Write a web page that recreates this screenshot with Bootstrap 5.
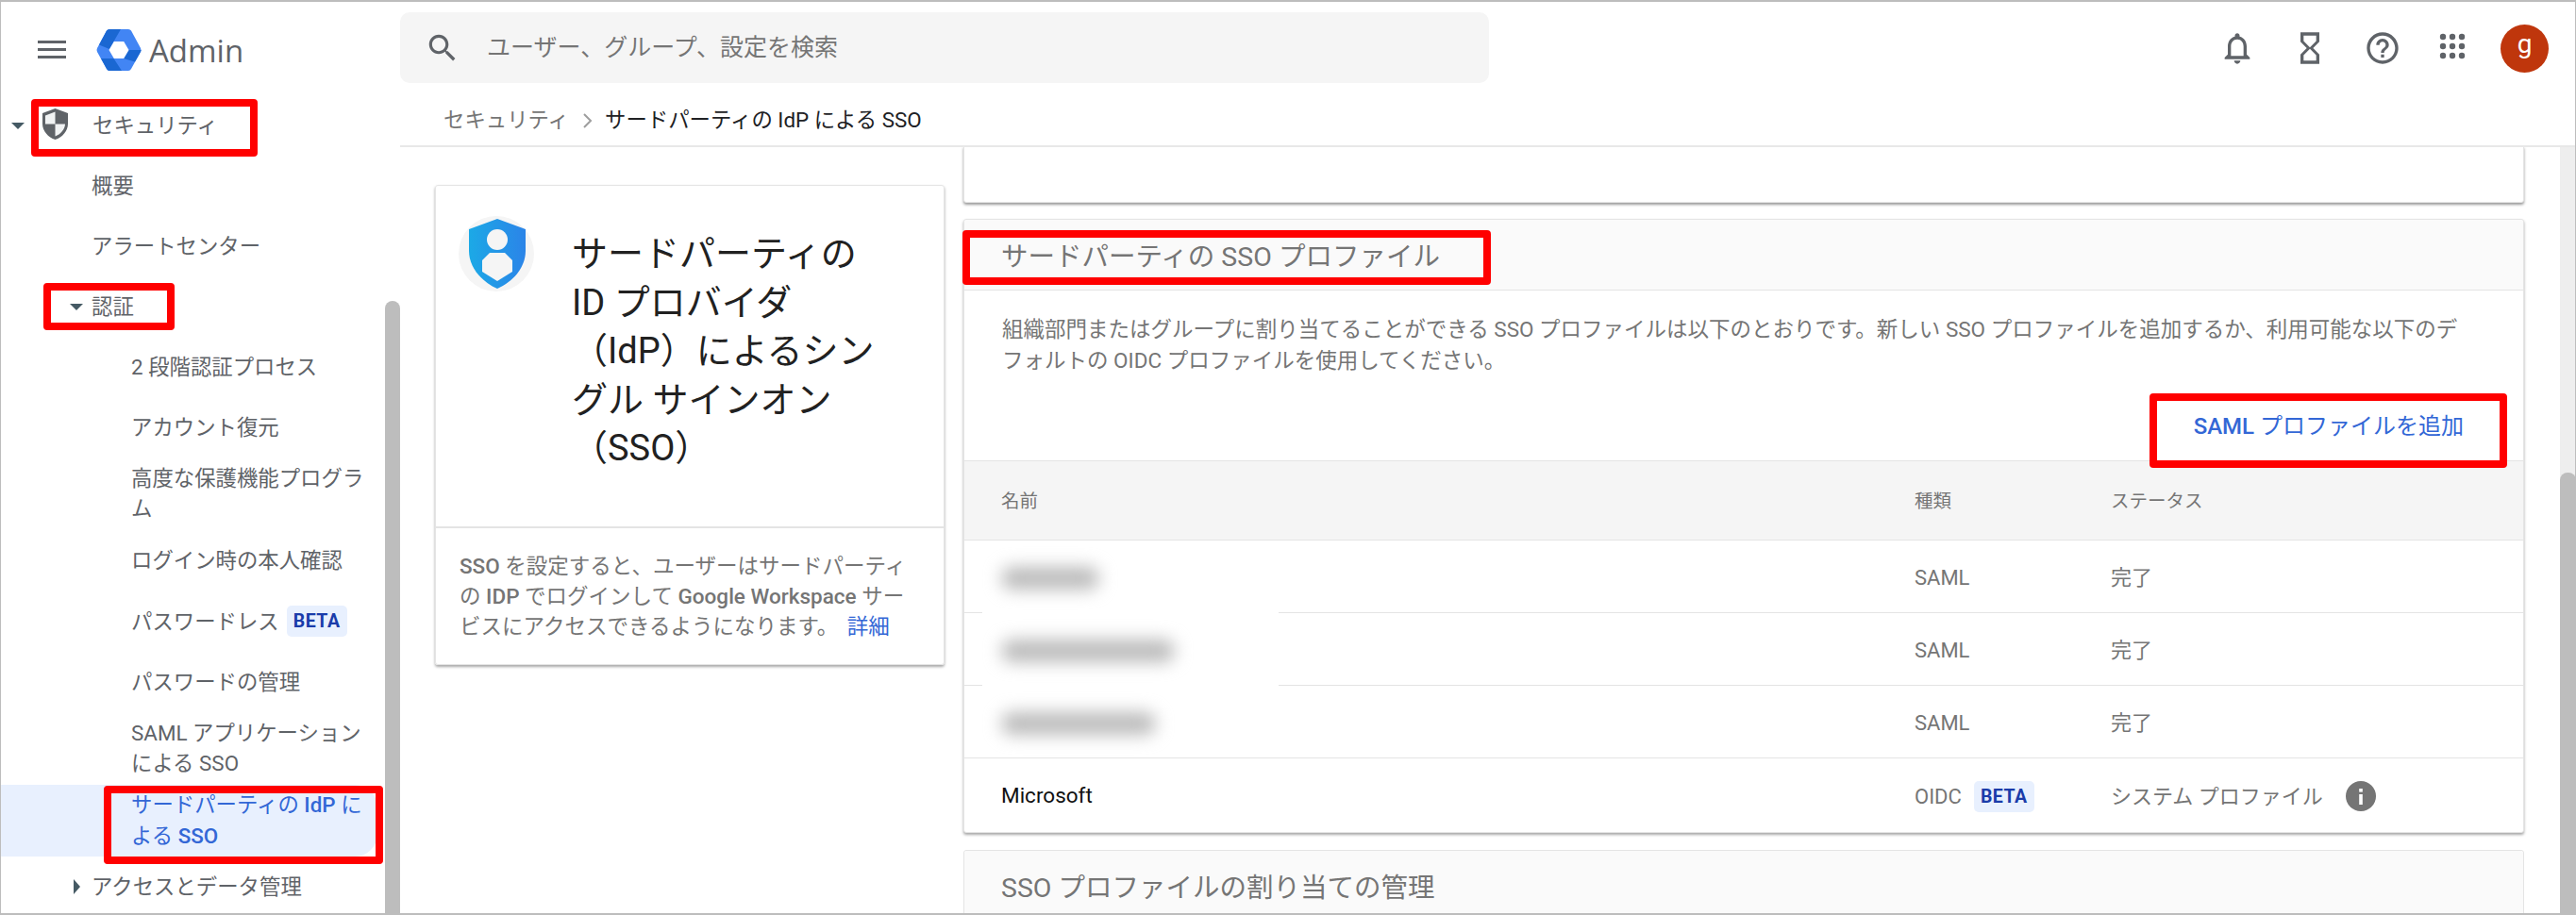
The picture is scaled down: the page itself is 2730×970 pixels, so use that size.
<!DOCTYPE html>
<html lang="ja">
<head>
<meta charset="UTF-8">
<title>Admin - サードパーティの IdP による SSO</title>
<link href="https://cdn.jsdelivr.net/npm/bootstrap@5.3.0/dist/css/bootstrap.min.css" rel="stylesheet">
<style>
html, body { height: 100%; overflow: hidden; }
body { font-family: Roboto, "Noto Sans CJK JP", sans-serif; font-size: 22.4px; color: #5f6368; background: #fff; }
.app-shell { position: relative; height: 970px; overflow: hidden; }
.app-frame { position: absolute; inset: 0; border: 1px solid #bdbdbd; border-top-width: 2px; border-bottom-width: 2px; pointer-events: none; z-index: 9; }
.note-box { position: absolute; border: 8px solid #f00; border-radius: 4px; z-index: 8; pointer-events: none; }
.note-a { left: 33px; top: 105px; width: 240px; height: 61px; }
.note-b { left: 46px; top: 300px; width: 139px; height: 50px; }
.note-c { left: 110px; top: 833px; width: 296px; height: 83px; }
.note-d { left: 1020px; top: 244px; width: 560px; height: 58px; }
.note-e { left: 2278px; top: 417px; width: 379px; height: 79px; }

.top-bar { height: 88px; }
.brand-area { width: 424px; padding-left: 40px; padding-top: 18px; }
.brand-name { font-family: "Open Sans", Roboto, sans-serif; font-size: 33px; color: #5f6368; margin-left: 8px; line-height: 1; }
.search-box { width: 1154px; height: 75px; margin-top: 13px; background: #f5f5f5; border-radius: 10px; padding-left: 26px; color: #757575; font-size: 25px; }
.search-box span { margin-left: 28px; }
.top-right { padding-top: 14px; }
.top-icons { gap: 37px; }
.top-icon { width: 40px; height: 40px; }
.user-dot { width: 51px; height: 51px; border-radius: 50%; background: #bf360c; color: #fff; font-size: 28px; margin-left: 28px; margin-right: 29px; line-height: 1; padding-bottom: 8px; }

.side-nav { width: 424px; height: 882px; position: relative; padding-top: 13px; overflow: hidden; }
.side-thumb { position: absolute; right: 0; top: 231px; bottom: 0; width: 16px; background: #bdbdbd; border-radius: 8px 8px 0 0; }
.side-item { display: flex; align-items: center; padding-top: 16px; padding-bottom: 16px; line-height: 32px; color: #5f6368; font-size: 22.4px; text-decoration: none; }
.lvl-1 { padding-left: 97px; }
.lvl-2 { padding-left: 139px; padding-right: 20px; width: 408px; }
.side-two { padding-top: 6px; padding-bottom: 7px; }
.side-active { width: 400px; height: 76px; padding: 5px 0 5px 139px; background: #e8f0fe; color: #3367d6; border-radius: 0 24px 24px 0; line-height: 33px; white-space: nowrap; }
.caret-down { width: 0; height: 0; border-left: 7px solid transparent; border-right: 7px solid transparent; border-top: 7px solid #455a64; }
.caret-right { width: 0; height: 0; border-top: 8px solid transparent; border-bottom: 8px solid transparent; border-left: 7px solid #455a64; }
.lat { font-weight: 500; }
.beta-tag { display: inline-block; background: #e8f0fe; color: #1a3caa; font-weight: 700; font-size: 19.5px; line-height: 33px; height: 33px; border-radius: 5px; padding: 0 7px; letter-spacing: .5px; }
.beta-gap { margin-left: 13px; }

.crumb-bar { height: 68px; border-bottom: 2px solid #e8e8e8; padding-left: 46px; padding-top: 14px; font-size: 22.4px; color: #757575; }
.crumb-now { color: #202124; }
.crumb-sep { margin: 0 12px 0 14px; }
.work-row { height: 814px; overflow: hidden; }
.work-col-left { width: 577px; padding-left: 37px; padding-top: 40px; }
.work-col-right { width: 1654px; margin-left: 20px; margin-right: 38px; }
.main-scroll { width: 17px; background: #eee; }
.main-thumb { margin-top: 345px; height: 470px; background: #bdbdbd; border-radius: 8px 8px 0 0; }

.info-card { height: 509px; border: 1px solid #e4e4e4; border-radius: 3px; box-shadow: 0 2px 3px rgba(0,0,0,.35); }
.info-top { height: 363px; padding: 32px 0 0 24px; border-bottom: 2px solid #e4e4e4; }
.info-title { font-size: 38px; line-height: 51.5px; color: #212121; margin: 15px 0 0 40px; white-space: nowrap; font-weight: 400; }
.info-text { padding: 24px 20px 24px 25px; line-height: 32px; color: #757575; font-size: 22.5px; white-space: nowrap; }
.info-text a, .add-btn { color: #3367d6; text-decoration: none; }

.stub-card { height: 60px; margin-top: -1px; border: 1px solid #e4e4e4; border-radius: 0 0 3px 3px; box-shadow: 0 2px 3px rgba(0,0,0,.4); }
.sso-card { margin-top: 17px; height: 651px; border-color: #e4e4e4; border-radius: 3px; box-shadow: 0 2px 3px rgba(0,0,0,.35); }
.sso-card .card-header, .plain-card .card-header { height: 75px; padding: 4px 0 0 39px; background: #fafafa; border-bottom: 1px solid #e4e4e4; font-size: 28.5px; line-height: 71px; color: #757575; border-radius: 3px 3px 0 0; white-space: nowrap; }
.sso-desc { padding: 25px 60px 0 40px; line-height: 33px; color: #757575; font-size: 22.5px; white-space: nowrap; }
.add-row { height: 40px; margin-top: 33px; margin-bottom: 16px; padding-right: 63px; }
.add-btn { padding: 0; border: 0; font-size: 24px; line-height: 40px; }
.table-wrap { position: relative; }
.line-gap { position: absolute; left: 19px; top: 156px; width: 314px; height: 87px; background: #fff; z-index: 1; }
.sso-table { table-layout: fixed; margin: 0; color: #757575; font-size: 22px; }
.sso-table th, .sso-table td { padding: 3px 0 0; vertical-align: middle; border-color: #e4e4e4; color: #757575; }
.sso-table thead th { height: 84px; background: #f5f5f5; font-weight: 400; font-size: 19.5px; border-top: 1px solid #e4e4e4; }
.sso-table tbody td { height: 77px; }
.sso-table tr:last-child td { height: 78px; border-bottom: 0; }
.sso-table .name-cell { padding-left: 39px; position: relative; z-index: 2; }
.sso-table td.ms-name { color: #111; font-size: 22.5px; }
.blur-name { display: block; height: 24px; background: #bbb; border-radius: 12px; filter: blur(9px); }
.col-name { width: 1007px; }
.col-kind { width: 208px; }
.info-dot { width: 32px; height: 32px; margin-left: 24px; }
.plain-card { margin-top: 18px; height: 120px; border-color: #e4e4e4; border-radius: 3px; }
</style>
</head>
<body>
<div class="app-shell">
  <div class="app-frame"></div>
  <div class="note-box note-a"></div>
  <div class="note-box note-b"></div>
  <div class="note-box note-c"></div>
  <div class="note-box note-d"></div>
  <div class="note-box note-e"></div>

  <header class="top-bar d-flex">
    <div class="brand-area d-flex align-items-center">
      <svg width="30" height="20" viewBox="0 0 30 20" class="me-4 flex-shrink-0"><rect y="0" width="30" height="3" fill="#5f6368"/><rect y="8" width="30" height="3" fill="#5f6368"/><rect y="16" width="30" height="3" fill="#5f6368"/></svg>
      <svg width="48" height="44" viewBox="0 0 48 44" class="ms-2 flex-shrink-0">
        <path d="M11 1.5Q12 0 14 0H34Q36 0 37 1.5L47 20Q48 22 47 24L37 42Q36 44 34 44H14Q12 44 11 42L1 24Q0 22 1 20Z" fill="#4285f4"/>
        <path d="M3 16.5L11 1.5Q12 0 14 0H26L18.5 13L14 21Z" fill="#1a67d2"/>
        <path d="M34.5 22H47.6Q47.6 23 47 24L41 34.5L29 31Z" fill="#1a67d2"/>
        <path d="M5 31L18.5 31L27 44H14Q12 44 11 42Z" fill="#1a67d2"/>
        <path d="M18.8 13H29.2L34.5 22L29.2 31H18.8L13.5 22Z" fill="#fff"/>
      </svg>
      <span class="brand-name">Admin</span>
    </div>
    <div class="search-box d-flex align-items-center">
      <svg width="38" height="38" viewBox="0 0 24 24" fill="#5f6368"><path d="M15.5 14h-.79l-.28-.27C15.41 12.59 16 11.11 16 9.5 16 5.91 13.09 3 9.5 3S3 5.91 3 9.5 5.91 16 9.5 16c1.61 0 3.09-.59 4.23-1.57l.27.28v.79l5 4.99L20.49 19l-4.99-5zm-6 0C7.01 14 5 11.99 5 9.5S7.01 5 9.5 5 14 7.01 14 9.5 11.99 14 9.5 14z"/></svg>
      <span>ユーザー、グループ、設定を検索</span>
    </div>
    <div class="top-right ms-auto d-flex align-items-center">
      <div class="top-icons d-flex align-items-center">
        <svg class="top-icon" viewBox="0 0 24 24" fill="#5f6368"><path d="M12 22c1.1 0 2-.9 2-2h-4c0 1.1.9 2 2 2zm6-6v-5c0-3.07-1.63-5.64-4.5-6.32V4c0-.83-.67-1.5-1.5-1.5s-1.5.67-1.5 1.5v.68C7.64 5.36 6 7.92 6 11v5l-2 2v1h16v-1l-2-2zm-2 1H8v-6c0-2.48 1.51-4.5 4-4.5s4 2.02 4 4.5v6z"/></svg>
        <svg class="top-icon" viewBox="0 0 24 24" fill="#5f6368"><path d="M6 2v6h.01L6 8.01 10 12l-4 4 .01.01H6V22h12v-5.99h-.01L18 16l-4-4 4-3.99-.01-.01H18V2H6zm10 14.5V20H8v-3.5l4-4 4 4zm-4-5l-4-4V4h8v3.5l-4 4z"/></svg>
        <svg class="top-icon" viewBox="0 0 24 24" fill="#5f6368"><path d="M11 18h2v-2h-2v2zm1-16C6.48 2 2 6.48 2 12s4.48 10 10 10 10-4.48 10-10S17.52 2 12 2zm0 18c-4.41 0-8-3.59-8-8s3.59-8 8-8 8 3.59 8 8-3.59 8-8 8zm0-14c-2.21 0-4 1.79-4 4h2c0-1.1.9-2 2-2s2 .9 2 2c0 2-3 1.75-3 5h2c0-2.25 3-2.5 3-5 0-2.21-1.79-4-4-4z"/></svg>
        <svg class="top-icon" viewBox="0 0 40 40" fill="#5f6368"><circle cx="7" cy="8" r="3.2"/><circle cx="17" cy="8" r="3.2"/><circle cx="27" cy="8" r="3.2"/><circle cx="7" cy="18" r="3.2"/><circle cx="17" cy="18" r="3.2"/><circle cx="27" cy="18" r="3.2"/><circle cx="7" cy="28" r="3.2"/><circle cx="17" cy="28" r="3.2"/><circle cx="27" cy="28" r="3.2"/></svg>
      </div>
      <div class="user-dot d-flex align-items-center justify-content-center">g</div>
    </div>
  </header>

  <div class="d-flex">
    <nav class="side-nav flex-shrink-0">
      <div class="side-thumb"></div>
      <a class="side-item" href="#" style="padding-left:12px">
        <span class="caret-down"></span>
        <svg width="27" height="33" viewBox="0 0 27 33" class="flex-shrink-0" style="margin-left:19px;margin-top:-3px">
          <path d="M13.5 0L27 5V16C27 24 21 30.5 13.5 33C6 30.5 0 24 0 16V5Z" fill="#5f6368"/>
          <path d="M13.5 3.5L3 7.5V16.5H13.5ZM13.5 16.5V29.5C19 27.5 24 22 24 16.5Z" fill="#f1f3f4"/>
        </svg>
        <span style="margin-left:26px">セキュリティ</span>
      </a>
      <a class="side-item lvl-1" href="#">概要</a>
      <a class="side-item lvl-1" href="#">アラートセンター</a>
      <a class="side-item" href="#" style="padding-left:74px"><span class="caret-down"></span><span style="margin-left:9px">認証</span></a>
      <a class="side-item lvl-2" href="#">2 段階認証プロセス</a>
      <a class="side-item lvl-2" href="#">アカウント復元</a>
      <a class="side-item lvl-2 side-two" href="#">高度な保護機能プログラム</a>
      <a class="side-item lvl-2" href="#">ログイン時の本人確認</a>
      <a class="side-item lvl-2" href="#">パスワードレス<span class="beta-tag ms-2">BETA</span></a>
      <a class="side-item lvl-2" href="#">パスワードの管理</a>
      <a class="side-item lvl-2 side-two" href="#">SAML アプリケーションによる SSO</a>
      <a class="side-item side-active" href="#"><span>サードパーティの <span class="lat">IdP</span> に<br>よる <span class="lat">SSO</span></span></a>
      <a class="side-item" href="#" style="padding-left:78px"><span class="caret-right"></span><span style="margin-left:12px">アクセスとデータ管理</span></a>
    </nav>

    <div class="flex-grow-1">
      <div class="crumb-bar d-flex align-items-center">
        <span>セキュリティ</span>
        <svg width="12" height="18" viewBox="0 0 12 18" class="crumb-sep"><path d="M2 2L9 9L2 16" fill="none" stroke="#9e9e9e" stroke-width="2"/></svg>
        <span class="crumb-now">サードパーティの IdP による SSO</span>
      </div>
      <div class="work-row d-flex">
        <div class="work-col-left flex-shrink-0">
          <div class="info-card">
            <div class="info-top d-flex align-items-start">
              <svg width="80" height="80" viewBox="0 0 80 80" class="flex-shrink-0">
                <defs><linearGradient id="shieldFill" x1="0" y1="0" x2="1" y2="0"><stop offset="0" stop-color="#1ca9e6"/><stop offset="1" stop-color="#2b84e8"/></linearGradient></defs>
                <circle cx="40" cy="40" r="40" fill="#f5f5f5"/>
                <path d="M41 3L71 14V37C71 55 57 70 41 77C25 70 11 55 11 37V14Z" fill="url(#shieldFill)"/>
                <circle cx="41" cy="25" r="11" fill="#f5f5f5"/>
                <path d="M33 39H49L57 47V59L41 69L25 59V47Z" fill="#f5f5f5"/>
              </svg>
              <h1 class="info-title">サードパーティの<br>ID プロバイダ<br>（IdP）によるシン<br>グル サインオン<br>（SSO）</h1>
            </div>
            <div class="info-text">
              <span class="lat">SSO</span> を設定すると、ユーザーはサードパーティ<br>の <span class="lat">IDP</span> でログインして <span class="lat">Google Workspace</span> サー<br>ビスにアクセスできるようになります。 <a href="#" class="ms-1">詳細</a>
            </div>
          </div>
        </div>

        <div class="work-col-right flex-shrink-0">
          <div class="stub-card bg-white"></div>
          <div class="card sso-card">
            <div class="card-header">サードパーティの SSO プロファイル</div>
            <div class="sso-desc">組織部門またはグループに割り当てることができる SSO プロファイルは以下のとおりです。新しい SSO プロファイルを追加するか、利用可能な以下のデ<br>フォルトの OIDC プロファイルを使用してください。</div>
            <div class="add-row d-flex justify-content-end">
              <a href="#" class="btn btn-link add-btn"><span class="lat">SAML</span> プロファイルを追加</a>
            </div>
            <div class="table-wrap">
              <div class="line-gap"></div>
              <table class="table sso-table">
                <colgroup><col class="col-name"><col class="col-kind"><col></colgroup>
                <thead>
                  <tr><th class="name-cell">名前</th><th>種類</th><th>ステータス</th></tr>
                </thead>
                <tbody>
                  <tr><td class="name-cell"><span class="blur-name" style="width:104px"></span></td><td>SAML</td><td>完了</td></tr>
                  <tr><td class="name-cell"><span class="blur-name" style="width:184px"></span></td><td>SAML</td><td>完了</td></tr>
                  <tr><td class="name-cell"><span class="blur-name" style="width:164px"></span></td><td>SAML</td><td>完了</td></tr>
                  <tr>
                    <td class="name-cell ms-name">Microsoft</td>
                    <td><span class="d-inline-flex align-items-center">OIDC<span class="beta-tag beta-gap">BETA</span></span></td>
                    <td>
                      <span class="d-inline-flex align-items-center">システム プロファイル
                        <svg class="info-dot" viewBox="0 0 32 32"><circle cx="16" cy="16" r="16" fill="#757575"/><rect x="14.2" y="14" width="3.6" height="11" fill="#fff"/><rect x="14.2" y="8" width="3.6" height="3.6" fill="#fff"/></svg>
                      </span>
                    </td>
                  </tr>
                </tbody>
              </table>
            </div>
          </div>
          <div class="card plain-card">
            <div class="card-header">SSO プロファイルの割り当ての管理</div>
          </div>
        </div>
        <div class="main-scroll flex-shrink-0"><div class="main-thumb"></div></div>
      </div>
    </div>
  </div>
</div>
<script src="https://cdn.jsdelivr.net/npm/bootstrap@5.3.0/dist/js/bootstrap.bundle.min.js"></script>
</body>
</html>
